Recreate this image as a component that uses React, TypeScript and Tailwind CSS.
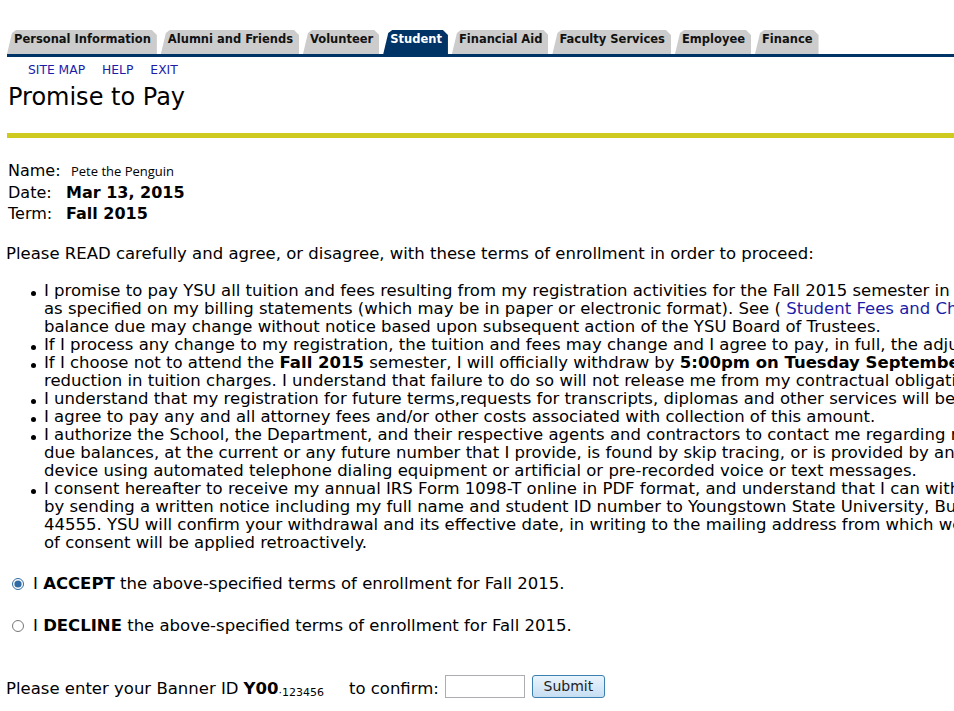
import React from 'react';

const tabs = [
  'Personal Information',
  'Alumni and Friends',
  'Volunteer',
  'Student',
  'Financial Aid',
  'Faculty Services',
  'Employee',
  'Finance',
];

const verdana = { fontFamily: '"DejaVu Sans", Verdana, sans-serif' };

function Bullet({ children }: { children: React.ReactNode }) {
  return (
    <li className="flex leading-[18px]">
      <span className="w-[15px] shrink-0 pt-[9px] pl-[2px]">
        <span className="block w-[5px] h-[5px] rounded-full bg-black" />
      </span>
      <div className="whitespace-nowrap">{children}</div>
    </li>
  );
}

export default function App() {
  return (
    <div className="w-[954px] h-[711px] overflow-hidden bg-white text-black" style={verdana}>
      <div className="pt-[30px] pl-[7px]">
        <div className="flex items-end gap-[4px] h-[24px]">
          {tabs.map(t => (
            <div
              key={t}
              className={`h-[24px] pl-[7px] pr-[6px] pt-[1px] text-[11.5px] leading-[16px] font-bold [clip-path:polygon(0_100%,5px_3px,9px_0,calc(100%-5px)_0,100%_5px,100%_100%)] ${
                t === 'Student' ? 'bg-[#003366] text-white' : 'bg-[#cccccc] text-[#111]'
              }`}
            >
              {t}
            </div>
          ))}
        </div>
        <div className="h-[3px] bg-[#003366]" />
      </div>

      <div className="flex gap-[17px] pl-[28px] pt-[5px] text-[12.3px] text-[#1c1ca8] leading-[16px]">
        <span>SITE MAP</span>
        <span>HELP</span>
        <span>EXIT</span>
      </div>

      <h1 className="pl-[8px] pt-[4px] text-[24px] leading-[30px]">Promise to Pay</h1>

      <div className="ml-[7px] mt-[21px] h-[5px] bg-[#cfca1f]" />

      <div className="pl-[8px] pt-[22px] text-[16px] leading-[21px]">
        <div className="flex items-baseline">
          <span className="w-[63px]">Name:</span>
          <span className="text-[13px]" style={{ fontFamily: '"Open Sans", sans-serif' }}>Pete the Penguin</span>
        </div>
        <div className="flex items-baseline">
          <span className="w-[58px]">Date:</span>
          <span className="font-bold">Mar 13, 2015</span>
        </div>
        <div className="flex items-baseline">
          <span className="w-[58px]">Term:</span>
          <span className="font-bold">Fall 2015</span>
        </div>
      </div>

      <p className="pl-[6px] pt-[21px] text-[16.5px] leading-[18px] whitespace-nowrap">
        Please READ carefully and agree, or disagree, with these terms of enrollment in order to proceed:
      </p>

      <ul className="pl-[29px] pt-[19px] text-[16.5px] leading-[18px]">
        <Bullet>
          I promise to pay YSU all tuition and fees resulting from my registration activities for the Fall 2015 semester in accordance with
          <br />
          as specified on my billing statements (which may be in paper or electronic format). See ({' '}
          <span className="text-[#1c1ca8]">Student Fees and Charges</span> )
          <br />
          balance due may change without notice based upon subsequent action of the YSU Board of Trustees.
        </Bullet>
        <Bullet>
          If I process any change to my registration, the tuition and fees may change and I agree to pay, in full, the adjusted amount.
        </Bullet>
        <Bullet>
          If I choose not to attend the <b>Fall 2015</b> semester, I will officially withdraw by{' '}
          <b>5:00pm on Tuesday September 1, 2015</b>
          <br />
          reduction in tuition charges. I understand that failure to do so will not release me from my contractual obligation.
        </Bullet>
        <Bullet>
          I understand that my registration for future terms,requests for transcripts, diplomas and other services will be withheld
        </Bullet>
        <Bullet>I agree to pay any and all attorney fees and/or other costs associated with collection of this amount.</Bullet>
        <Bullet>
          I authorize the School, the Department, and their respective agents and contractors to contact me regarding my account
          <br />
          due balances, at the current or any future number that I provide, is found by skip tracing, or is provided by any
          <br />
          device using automated telephone dialing equipment or artificial or pre-recorded voice or text messages.
        </Bullet>
        <Bullet>
          I consent hereafter to receive my annual IRS Form 1098-T online in PDF format, and understand that I can withdraw
          <br />
          by sending a written notice including my full name and student ID number to Youngstown State University, Bursar
          <br />
          44555. YSU will confirm your withdrawal and its effective date, in writing to the mailing address from which we
          <br />
          of consent will be applied retroactively.
        </Bullet>
      </ul>

      <div className="pl-[12px] pt-[23px] text-[16.5px] leading-[18px]">
        <label className="flex items-center gap-[9px] h-[18px]">
          <input type="radio" name="terms" defaultChecked className="w-[12px] h-[12px] m-0 accent-[#2f6aa3]" />
          <span>
            I <b>ACCEPT</b> the above-specified terms of enrollment for Fall 2015.
          </span>
        </label>
        <label className="flex items-center gap-[9px] h-[18px] mt-[24px]">
          <input type="radio" name="terms" className="w-[12px] h-[12px] m-0 accent-[#2f6aa3]" />
          <span>
            I <b>DECLINE</b> the above-specified terms of enrollment for Fall 2015.
          </span>
        </label>
      </div>

      <div className="pl-[6px] pt-[42px] flex items-center text-[16.5px] whitespace-nowrap">
        <span>Please enter your Banner ID </span>
        <b className="ml-[5px]">Y00</b>
        <span className="text-[11px] relative top-[4px]">·123456</span>
        <span className="ml-[25px]">to confirm:</span>
        <input className="relative -top-[3px] ml-[6px] w-[80px] h-[23px] border border-[#abadb3] bg-white outline-none" />
        <button className="relative -top-[3px] ml-[7px] w-[73px] h-[23px] rounded-[3px] border border-[#3c7fb1] bg-gradient-to-b from-[#eaf4fc] to-[#c6def2] text-[14px] leading-[20px] text-[#222]">
          Submit
        </button>
      </div>
    </div>
  );
}
